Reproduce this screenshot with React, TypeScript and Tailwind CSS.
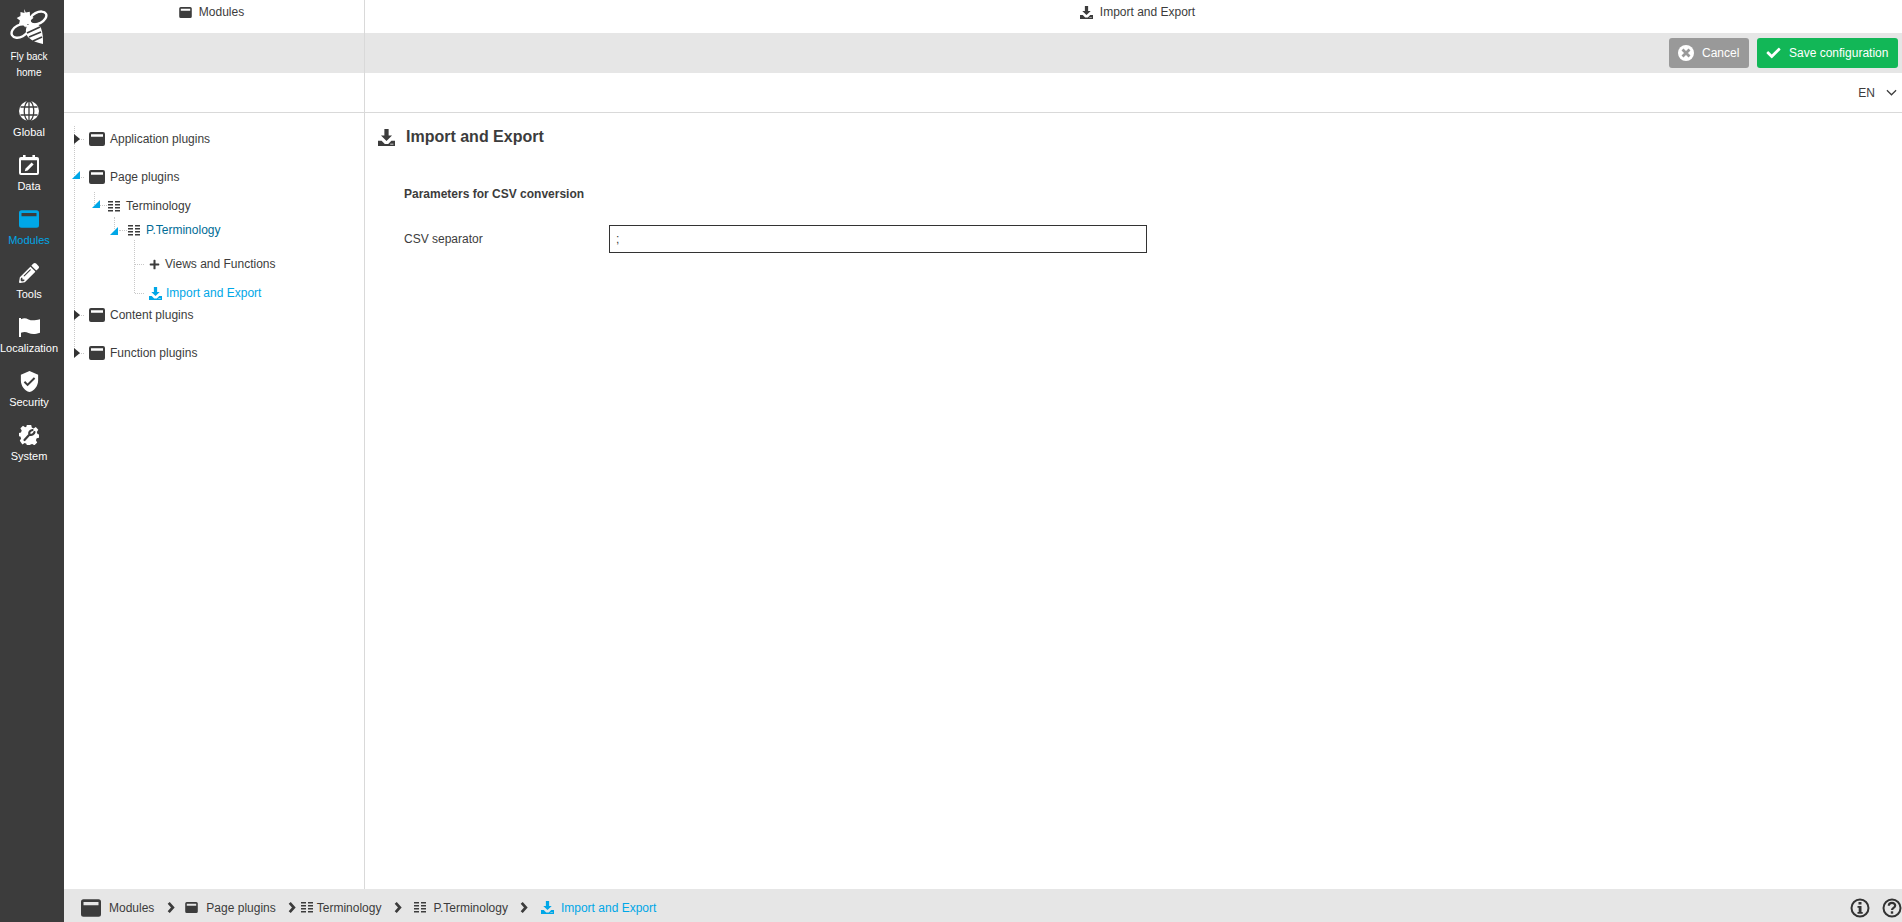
import React from 'react';
import { FaPencilAlt, FaCheck, FaPlus } from 'react-icons/fa';
import { MdVerifiedUser } from 'react-icons/md';

const WindowIcon = ({ className }: { className: string }) => (
  <svg viewBox="0 0 16 14" className={className} fill="currentColor">
    <path fillRule="evenodd" d="M2 0h12a2 2 0 0 1 2 2v10a2 2 0 0 1-2 2H2a2 2 0 0 1-2-2V2a2 2 0 0 1 2-2zM2 2.200v2.600h12V2.200z" />
  </svg>
);

const DownloadIcon = ({ className }: { className: string }) => (
  <svg viewBox="0 0 16 16" className={className} fill="currentColor">
    <path d="M6 0h4v6h3.200L8 11.200 2.800 6H6z" />
    <path fillRule="evenodd" d="M0 11h3.400l3 3h3.200l3-3H16v5H0zM11.500 13.800v.8h3v-.8z" />
  </svg>
);

const GridIcon = ({ className }: { className: string }) => (
  <svg viewBox="0 0 12 11" className={className} fill="currentColor">
    <path d="M0 0h5v1.600H0zM7 0h5v1.600H7zM0 3h5v1.600H0zM7 3h5v1.600H7zM0 6h5v1.600H0zM7 6h5v1.600H7zM0 9h5v1.600H0zM7 9h5v1.600H7z" />
  </svg>
);

// bee: star head, two outlined wings, striped body
const BeeLogo = () => (
  <svg viewBox="0 0 38 36" className="w-[38px] h-[36px]" fill="none" stroke="white" strokeWidth="2.400">
    <path fill="white" stroke="none" d="M14 0l1.800 3.600 4-.9.200 4.100 3.600 2-3.200 2.600 1 3.900-4.100-.2-2.100 3.500-2.300-3.400-4 .4 1-4-3.200-2.500 3.700-2 .1-4.100 4 .9z" />
    <ellipse cx="28" cy="9" rx="9" ry="5.500" transform="rotate(-28 28 9)" />
    <ellipse cx="10" cy="22" rx="9" ry="6" transform="rotate(-28 10 22)" />
    <path fill="white" stroke="none" d="M19 15c5-2 10 0 12 4 2 5 2 11 2 16-5-1-11-3-15-7-3-4-3-10 1-13z" />
    <path stroke="#3c3c3c" strokeWidth="1.800" d="M17 24l13-6M19 28l12-5M23 32l9-4" />
  </svg>
);

const GlobeIcon = () => (
  <svg viewBox="0 0 20 20" className="w-[20px] h-[20px]">
    <circle cx="10" cy="10" r="10" fill="white" />
    <g fill="none" stroke="#3c3c3c" strokeWidth="1.300">
      <ellipse cx="10" cy="10" rx="4.800" ry="10" />
      <path d="M10 0v20M1.500 6h17M1.500 14h17" />
    </g>
  </svg>
);

const CalendarIcon = () => (
  <svg viewBox="0 0 20 20" className="w-[20px] h-[20px]" fill="white">
    <path fillRule="evenodd" d="M4 0h2.600v2h6.800V0H16v2h2a2 2 0 0 1 2 2v14a2 2 0 0 1-2 2H2a2 2 0 0 1-2-2V4a2 2 0 0 1 2-2h2zM2 5.200V18h16V5.200z" />
    <path d="M12.600 7.400l2 2-6 6-2.800.8.800-2.800z" />
  </svg>
);

const FlagIcon = () => (
  <svg viewBox="0 0 21 20" className="w-[21px] h-[20px]" fill="white">
    <path d="M0 1h2v1.200c3-1.400 5-1 7.500.2 3 1.300 6 1.300 11.500-.2v13.500c-5 1.800-8.500 1.600-11.500.2-2.500-1.100-4.500-1.400-7.500-.1V20H0z" />
  </svg>
);

const GearIcon = () => (
  <svg viewBox="0 0 20 20" className="w-[20px] h-[20px]" fill="white">
    <path d="M7.800 0h4.400l.6 2.600 1.700.8 2.300-1.400 2.500 2.800-1.500 2.200.7 1.900 1.500.6v3.200l-2.300.6-.8 1.900 1.300 2.300-2.800 2.800-2.200-1.400-1.800.7-.6 1.400H8l-.6-2.300-1.800-.7-2.200 1.400L.8 15.700l1.300-2.200-.7-1.900L0 11.200V8l2-.6.700-1.900L1.400 3.200 4 .8l2.200 1.400 1.200-.5z" />
    <path stroke="#3c3c3c" strokeWidth="2.200" strokeLinecap="round" fill="none" d="M5.500 15L10.500 9.500M10.500 9.500c-1-2 .5-4 3-4.500M10.500 9.500c2 1 4.500 0 5-2.500" />
  </svg>
);

const NavItem = ({ icon, label, active }: { icon: React.ReactNode; label: string; active?: boolean }) => (
  <div className={`h-[54px] flex flex-col items-center pt-[8px] ${active ? 'text-[#00a7e7]' : 'text-white'}`}>
    <div className="h-[22px] flex items-center justify-center">{icon}</div>
    <div className="text-[11px] leading-[13px] mt-[4px] whitespace-nowrap">{label}</div>
  </div>
);

const OpenCaret = ({ className }: { className: string }) => (
  <svg viewBox="0 0 8 8" className={`w-[8px] h-[8px] text-[#00a7e7] shrink-0 ${className}`} fill="currentColor">
    <path d="M8 0v8H0z" />
  </svg>
);

const RootRow = ({ label, open, className }: { label: string; open?: boolean; className: string }) => (
  <div className={`flex items-center h-[20px] relative ${className}`}>
    <div className="w-[16px] flex justify-end shrink-0">
      {open ? (
        <OpenCaret className="mb-[4px]" />
      ) : (
        <svg viewBox="0 0 6 10" className="w-[6px] h-[10px] text-[#333]" fill="currentColor">
          <path d="M0 0l6 5-6 5z" />
        </svg>
      )}
    </div>
    <WindowIcon className="w-[16px] h-[14px] ml-[9px] mr-[5px] shrink-0" />
    <span>{label}</span>
  </div>
);

const Sep = ({ className }: { className: string }) => (
  <svg viewBox="0 0 8 12" className={`w-[8px] h-[11px] text-[#3c3c3c] shrink-0 ${className}`} fill="none" stroke="currentColor" strokeWidth="3">
    <path d="M1.500 1l4.500 5-4.500 5" />
  </svg>
);

export default function App() {
  return (
    <div className="flex h-[922px] w-[1902px] overflow-hidden bg-white text-[12px] text-[#3c3c3c] font-['Liberation_Sans',Arial,sans-serif]">
      <aside className="w-[64px] h-full bg-[#3c3c3c] shrink-0 flex flex-col pr-[6px]">
        <div className="h-[92px] pt-[9px] flex flex-col items-center text-white text-[10px] leading-[16px]">
          <BeeLogo />
          <div className="text-center mt-[4px]">Fly back<br />home</div>
        </div>
        <NavItem icon={<GlobeIcon />} label="Global" />
        <NavItem icon={<CalendarIcon />} label="Data" />
        <NavItem active icon={<WindowIcon className="w-[20px] h-[18px]" />} label="Modules" />
        <NavItem icon={<FaPencilAlt className="w-[20px] h-[20px]" />} label="Tools" />
        <NavItem icon={<FlagIcon />} label="Localization" />
        <NavItem icon={<MdVerifiedUser className="w-[23px] h-[23px]" />} label="Security" />
        <NavItem icon={<GearIcon />} label="System" />
      </aside>

      <div className="flex-1 flex flex-col min-w-0">
        <div className="h-[33px] flex shrink-0">
          <div className="w-[301px] border-r border-[#d9d9d9] flex items-center justify-center gap-[7px] pb-[9px] pr-[5px]">
            <WindowIcon className="w-[13px] h-[11px]" />
            <span>Modules</span>
          </div>
          <div className="flex-1 flex items-center justify-center gap-[7px] pb-[9px] pl-[8px]">
            <DownloadIcon className="w-[13px] h-[13px]" />
            <span>Import and Export</span>
          </div>
        </div>

        <div className="h-[40px] flex shrink-0 bg-[#e6e6e6]">
          <div className="w-[301px] border-r border-[#d9d9d9]" />
          <div className="flex-1 flex items-center justify-end gap-[8px] pr-[4px]">
            <button className="h-[30px] w-[80px] rounded-[3px] bg-[#999999] text-white flex items-center pl-[9px] gap-[8px]">
              <span className="w-[16px] h-[16px] rounded-full bg-white flex items-center justify-center">
                <svg viewBox="0 0 10 10" className="w-[10px] h-[10px]" fill="none" stroke="#999999" strokeWidth="2.800">
                  <path d="M1.500 1.500l7 7M8.500 1.500l-7 7" />
                </svg>
              </span>
              Cancel
            </button>
            <button className="h-[30px] w-[141px] rounded-[3px] bg-[#12b757] text-white flex items-center pl-[8px] gap-[7px]">
              <FaCheck className="w-[17px] h-[14px]" />
              Save configuration
            </button>
          </div>
        </div>

        <div className="h-[40px] flex shrink-0 border-b border-[#d9d9d9]">
          <div className="w-[301px] border-r border-[#d9d9d9]" />
          <div className="flex-1 flex items-center justify-end pr-[5px] gap-[11px]">
            <span>EN</span>
            <svg viewBox="0 0 12 7" className="w-[11px] h-[7px]" fill="none" stroke="currentColor" strokeWidth="1.300">
              <path d="M1 1l5 5 5-5" />
            </svg>
          </div>
        </div>

        <div className="flex-1 flex min-h-0">
          <div className="w-[301px] border-r border-[#d9d9d9] relative pt-[16px] shrink-0">
            {/* tree connectors */}
            <div className="absolute left-[10px] top-[13px] h-[227px] border-l border-dotted border-[#c8c8c8]" />
            <div className="absolute left-[14px] top-[26px] w-[6px] border-t border-dotted border-[#c8c8c8]" />
            <div className="absolute left-[14px] top-[64px] w-[6px] border-t border-dotted border-[#c8c8c8]" />
            <div className="absolute left-[14px] top-[202px] w-[6px] border-t border-dotted border-[#c8c8c8]" />
            <div className="absolute left-[14px] top-[240px] w-[6px] border-t border-dotted border-[#c8c8c8]" />
            <div className="absolute left-[30px] top-[79px] h-[13px] border-l border-dotted border-[#c8c8c8]" />
            <div className="absolute left-[36px] top-[92px] w-[7px] border-t border-dotted border-[#c8c8c8]" />
            <div className="absolute left-[50px] top-[104px] h-[12px] border-l border-dotted border-[#c8c8c8]" />
            <div className="absolute left-[55px] top-[117px] w-[8px] border-t border-dotted border-[#c8c8c8]" />
            <div className="absolute left-[70px] top-[127px] h-[53px] border-l border-dotted border-[#c8c8c8]" />
            <div className="absolute left-[71px] top-[151px] w-[9px] border-t border-dotted border-[#c8c8c8]" />
            <div className="absolute left-[71px] top-[180px] w-[9px] border-t border-dotted border-[#c8c8c8]" />

            <RootRow label="Application plugins" className="" />
            <RootRow open label="Page plugins" className="mt-[18px]" />

            <div className="flex items-center h-[20px] mt-[9px] pl-[28px]">
              <OpenCaret className="mb-[4px]" />
              <GridIcon className="w-[12px] h-[11px] ml-[8px] mr-[6px]" />
              <span>Terminology</span>
            </div>
            <div className="flex items-center h-[20px] mt-[4px] pl-[46px] text-[#006c96]">
              <OpenCaret className="mt-[2px]" />
              <GridIcon className="w-[12px] h-[11px] ml-[10px] mr-[6px] text-[#3c3c3c]" />
              <span>P.Terminology</span>
            </div>
            <div className="flex items-center h-[20px] mt-[14px] pl-[85px]">
              <FaPlus className="w-[11px] h-[11px] mr-[5px]" />
              <span>Views and Functions</span>
            </div>
            <div className="flex items-center h-[20px] mt-[9px] pl-[85px] text-[#00a7e7]">
              <DownloadIcon className="w-[13px] h-[13px] mr-[4px]" />
              <span>Import and Export</span>
            </div>
            <RootRow label="Content plugins" className="mt-[2px]" />
            <RootRow label="Function plugins" className="mt-[18px]" />
          </div>

          <main className="flex-1 pl-[13px] pt-[14px]">
            <div className="flex items-center h-[20px] gap-[11px]">
              <DownloadIcon className="w-[17px] h-[17px]" />
              <h1 className="text-[16px] font-bold">Import and Export</h1>
            </div>
            <div className="ml-[26px] mt-[39px] font-bold h-[16px] leading-[16px]">Parameters for CSV conversion</div>
            <div className="ml-[26px] mt-[23px] flex items-center">
              <label className="w-[205px] shrink-0">CSV separator</label>
              <div className="w-[538px] h-[28px] border border-[#333] pl-[6px] flex items-center bg-white">;</div>
            </div>
          </main>
        </div>

        <div className="h-[33px] shrink-0 bg-[#e6e6e6] flex items-center pl-[17px] pt-[4px]">
          <WindowIcon className="w-[20px] h-[18px] mr-[8px]" />
          <span>Modules</span>
          <Sep className="ml-[13px] mr-[10px]" />
          <WindowIcon className="w-[13px] h-[11px] mr-[8px]" />
          <span>Page plugins</span>
          <Sep className="ml-[12px] mr-[5px]" />
          <GridIcon className="w-[12px] h-[11px] mr-[4px]" />
          <span>Terminology</span>
          <Sep className="ml-[13px] mr-[12px]" />
          <GridIcon className="w-[12px] h-[11px] mr-[7px]" />
          <span>P.Terminology</span>
          <Sep className="ml-[12px] mr-[13px]" />
          <DownloadIcon className="w-[13px] h-[13px] mr-[7px] text-[#00a7e7]" />
          <span className="text-[#00a7e7]">Import and Export</span>
          <div className="ml-auto flex items-center gap-[12px]">
            <svg viewBox="0 0 20 20" className="w-[20px] h-[20px]" fill="none" stroke="#333" strokeWidth="2">
              <circle cx="10" cy="10" r="8.500" />
              <path stroke="none" fill="#333" d="M8.500 4h3v2.500h-3zM7.500 8h4v6h1.200v1.800H7.500V14h1.200V9.800H7.500z" />
            </svg>
            <svg viewBox="0 0 20 20" className="w-[20px] h-[20px]" fill="none" stroke="#333" strokeWidth="2">
              <circle cx="10" cy="10" r="8.500" />
              <path strokeWidth="2.200" d="M6.800 7.800c0-2 1.500-3 3.200-3s3.200 1 3.200 2.800c0 2.400-3.200 2.200-3.200 4.400" />
              <path stroke="none" fill="#333" d="M8.800 13.300h2.400v2.400H8.800z" />
            </svg>
          </div>
        </div>
      </div>
    </div>
  );
}
